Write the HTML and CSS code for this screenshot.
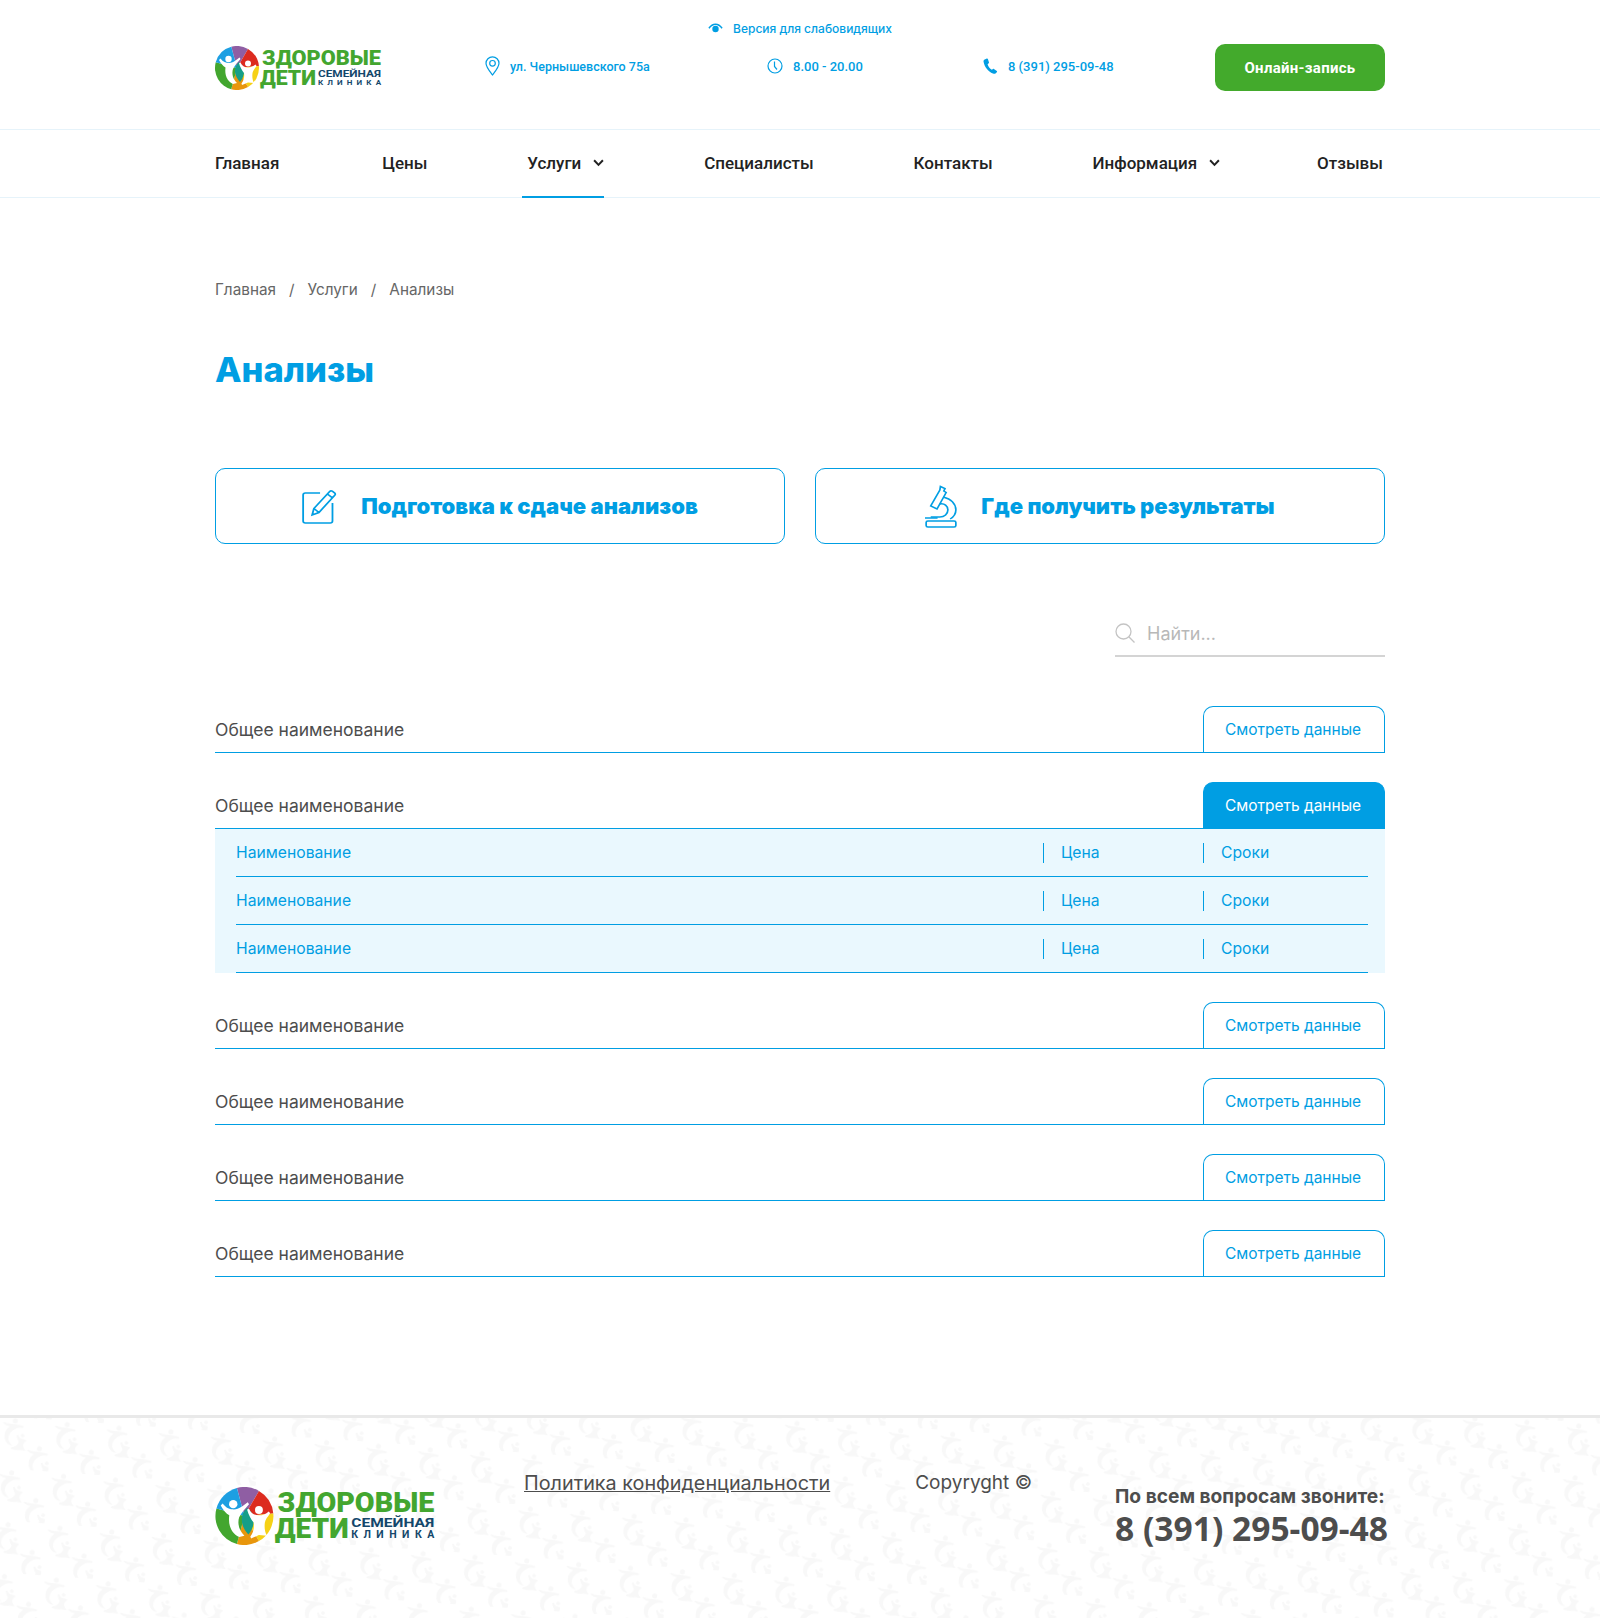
FILE: index.html
```html
<!DOCTYPE html>
<html lang="ru">
<head>
<meta charset="UTF-8" />
<title>Анализы - Здоровые дети</title>
<link rel="stylesheet" href="styles.css">
</head>
<body>

<header class="header">
    <div class="container">
        <a class="low-vision" href="#">
            <svg class="icon-eye" viewBox="0 0 16 11"><path d="M1 5.2C3 2.4 5.4 1 8 1s5 1.4 7 4.2" fill="none" stroke="#009ee3" stroke-width="1.6"/><circle cx="8" cy="6" r="3.4" fill="#009ee3"/></svg>
            Версия для слабовидящих
        </a>
        <div class="header-main">
            <a class="logo" href="#">
                <svg class="logo-img" viewBox="0 0 167 44">
                    <path d="M22 22L16.3.75A22 22 0 0 1 33 2.95Z" fill="#8f5ea3"/>
                    <path d="M22 22L33 2.95A22 22 0 0 1 43.9 20.1Z" fill="#dc2b1f"/>
                    <path d="M22 22L43.9 20.1A22 22 0 0 1 33 41.05Z" fill="#f6d116"/>
                    <path d="M22 22L33 41.05A22 22 0 0 1 16.3 43.25Z" fill="#e8960c"/>
                    <path d="M22 22L16.3 43.25A22 22 0 0 1 .75 16.3Z" fill="#43a62f"/>
                    <path d="M22 22L.75 16.3A22 22 0 0 1 16.3.75Z" fill="#1d9fe2"/>
                    <path d="M24 16C30 20 31 29 25 36C19 30 18 21 24 16Z" fill="#159e88"/>
                    <circle cx="13.5" cy="13" r="3.2" fill="#fff"/>
                    <path d="M4 14L5.500 12.500C8 16 11 17 14 17C18 17 21 14 24.500 11.500L25.500 13C22.500 16.500 20 19 18 23C16.500 28 18 33 22 37L18 38C12 35 9.500 29 10.500 21.500C8 20 6 17.500 4 14Z" fill="#fff"/>
                    <circle cx="33" cy="17.500" r="3" fill="#fff"/>
                    <path d="M24 17L25.500 16.500C27 20 29.500 21.500 33 21.500C36 21.500 38 20.500 40.500 18.500L41.500 20C39.500 23 38 24.500 37.500 27C37 31 37.500 34 39 37L33 36.500L27 39L26.500 37.500C29 34.500 29.500 31 29 27C27 24.500 25 21 24 17Z" fill="#fff"/>
                    <text class="logo-big" x="47" y="19" textLength="119" lengthAdjust="spacingAndGlyphs">ЗДОРОВЫЕ</text>
                    <text class="logo-big" x="45" y="38.500" textLength="56" lengthAdjust="spacingAndGlyphs">ДЕТИ</text>
                    <text class="logo-small" x="103" y="30.500" textLength="63" lengthAdjust="spacingAndGlyphs">СЕМЕЙНАЯ</text>
                    <text class="logo-small logo-small-wide" x="103" y="38.500" textLength="63" lengthAdjust="spacing">КЛИНИКА</text>
                </svg>
            </a>
            <a class="contact contact-address" href="#">
                <svg class="icon-pin" viewBox="0 0 15 20"><path d="M7.500 19C4 14.500 1 11 1 7.300A6.500 6.500 0 0 1 14 7.300C14 11 11 14.500 7.500 19Z" fill="none" stroke="#009ee3" stroke-width="1.2"/><circle cx="7.500" cy="7.300" r="2.800" fill="none" stroke="#009ee3" stroke-width="1.2"/></svg>
                ул. Чернышевского 75а
            </a>
            <span class="contact contact-time">
                <svg class="icon-clock" viewBox="0 0 16 16"><circle cx="8" cy="8" r="7" fill="none" stroke="#009ee3" stroke-width="1.2"/><path d="M7.500 3.500V8.500L10 11.500" fill="none" stroke="#009ee3" stroke-width="1.2"/></svg>
                8.00 - 20.00
            </span>
            <a class="contact contact-phone" href="#">
                <svg class="icon-phone" viewBox="0 0 15 16"><path d="M1.200 1.800L3.800 .6C4.300.4 4.700.6 4.900 1L6 4.400C6.100 4.800 6 5.100 5.700 5.300L4.600 6.200C5.300 8.500 6.800 10.500 8.800 11.800L10 10.900C10.300 10.700 10.600 10.700 10.900 10.900L13.800 13C14.100 13.300 14.200 13.700 14 14L12.500 15.400C11.900 15.800 11 15.900 10 15.500C5 13.500 1.500 9 .5 3.500C.4 2.800.7 2.100 1.200 1.800Z" fill="#009ee3"/></svg>
                8 (391) 295-09-48
            </a>
            <a class="btn-online" href="#">Онлайн-запись</a>
        </div>
    </div>
</header>

<nav class="nav">
    <div class="container">
        <div class="nav-list">
            <a href="#">Главная</a>
            <a href="#">Цены</a>
            <a class="active" href="#">Услуги <svg class="chevron" viewBox="0 0 10 7"><path d="M1 1L5 5.200L9 1" fill="none" stroke="#222" stroke-width="1.800"/></svg></a>
            <a href="#">Специалисты</a>
            <a href="#">Контакты</a>
            <a href="#">Информация <svg class="chevron" viewBox="0 0 10 7"><path d="M1 1L5 5.200L9 1" fill="none" stroke="#222" stroke-width="1.800"/></svg></a>
            <a href="#">Отзывы</a>
        </div>
    </div>
</nav>

<main class="container">
    <div class="breadcrumbs">
        <a href="#">Главная</a><span>/</span><a href="#">Услуги</a><span>/</span><a href="#">Анализы</a>
    </div>

    <h1>Анализы</h1>

    <div class="big-links">
        <a class="big-link" href="#">
            <svg class="icon-edit" viewBox="0 0 31 35" preserveAspectRatio="none">
                <path d="M16 4H3A2 2 0 0 0 1 6V32A2 2 0 0 0 3 34H25A2 2 0 0 0 27 32V14" fill="none" stroke="#009ee3" stroke-width="1.600"/>
                <path d="M9 26L10.500 19.500L24.500 2.500C25.200 1.700 26 1.600 26.800 2.200L28.800 3.900C29.600 4.600 29.700 5.400 29 6.200L15 23.500ZM10.500 19.500L15 23.500M22.500 5L27 8.800" fill="none" stroke="#009ee3" stroke-width="1.600"/>
            </svg>
            Подготовка к сдаче анализов
        </a>
        <a class="big-link" href="#">
            <svg class="icon-micro" viewBox="0 0 28 43" preserveAspectRatio="none">
                <path d="M13.500 1.500L17.500 3.500L16.500 6L18.500 7.500L10.500 24L5 21L13 5Z" fill="none" stroke="#009ee3" stroke-width="1.500"/>
                <path d="M16 12C23 14 27 19 27 25C27 29 25 32 22 34M13 19C17 18 20 21 20 25C20 29 17 32 13 32H5" fill="none" stroke="#009ee3" stroke-width="1.500"/>
                <path d="M0 33H11" fill="none" stroke="#009ee3" stroke-width="1.500"/>
                <rect x="1" y="36" width="26" height="6" rx="1.500" fill="none" stroke="#009ee3" stroke-width="1.500"/>
            </svg>
            Где получить результаты
        </a>
    </div>

    <div class="search">
        <svg class="icon-search" viewBox="0 0 20 20"><circle cx="8.500" cy="8.500" r="7.500" fill="none" stroke="#c4c4c4" stroke-width="1.300"/><path d="M13.800 13.800L19.500 19.500" stroke="#c4c4c4" stroke-width="1.300"/></svg>
        <input type="text" placeholder="Найти...">
    </div>

    <div class="price-list">
        <div class="group">
            <div class="group-head">
                <span class="group-name">Общее наименование</span>
                <a class="btn-data" href="#">Смотреть данные</a>
            </div>
        </div>
        <div class="group">
            <div class="group-head">
                <span class="group-name">Общее наименование</span>
                <a class="btn-data open" href="#">Смотреть данные</a>
            </div>
            <div class="group-body">
                <div class="item"><span class="item-name">Наименование</span><span class="item-price">Цена</span><span class="item-term">Сроки</span></div>
                <div class="item"><span class="item-name">Наименование</span><span class="item-price">Цена</span><span class="item-term">Сроки</span></div>
                <div class="item"><span class="item-name">Наименование</span><span class="item-price">Цена</span><span class="item-term">Сроки</span></div>
            </div>
        </div>
        <div class="group">
            <div class="group-head">
                <span class="group-name">Общее наименование</span>
                <a class="btn-data" href="#">Смотреть данные</a>
            </div>
        </div>
        <div class="group">
            <div class="group-head">
                <span class="group-name">Общее наименование</span>
                <a class="btn-data" href="#">Смотреть данные</a>
            </div>
        </div>
        <div class="group">
            <div class="group-head">
                <span class="group-name">Общее наименование</span>
                <a class="btn-data" href="#">Смотреть данные</a>
            </div>
        </div>
        <div class="group">
            <div class="group-head">
                <span class="group-name">Общее наименование</span>
                <a class="btn-data" href="#">Смотреть данные</a>
            </div>
        </div>
    </div>
</main>

<footer class="footer">
    <svg class="footer-bg" width="100%" height="100%">
        <defs>
            <g id="kid" fill="#f8f8f8">
                <circle cx="15" cy="4" r="3"/>
                <path d="M1 9L2.500 8C6 9 9 8.500 12 8C15 8 21 7 26 8L26 10C22 10.500 19 11 17 13C13 16 11 20 11 24C11 28 14 31 18 33L14 33C8 31 5 25 6 19C6.500 16 8 13.500 10 11.500C7 11.500 4 11 1 9Z"/>
                <circle cx="27" cy="19" r="2.200"/>
                <path d="M20 20L22 19.500C23 22 25 23 27 23L32 23L32 25C30 26 29.500 28 30 31C31 33 33 35 34 36L28 36C25 37 21 38 16 37L17 35C21 34 24 31 24 27C22 25 21 23 20 20Z"/>
            </g>
            <pattern id="kids" width="52" height="52" patternUnits="userSpaceOnUse" patternTransform="translate(0 -2) rotate(4)">
                <use href="#kid" transform="translate(1 1) scale(.85) rotate(8 20 20)"/>
                <use href="#kid" transform="translate(27 27) scale(.85) rotate(8 20 20)"/>
            </pattern>
        </defs>
        <rect width="100%" height="100%" fill="url(#kids)"/>
    </svg>
    <div class="container footer-inner">
        <a class="footer-logo" href="#">
            <svg class="logo-img" viewBox="0 0 167 44">
                <path d="M22 22L16.300.75A22 22 0 0 1 33 2.950Z" fill="#8f5ea3"/>
                <path d="M22 22L33 2.950A22 22 0 0 1 43.900 20.100Z" fill="#dc2b1f"/>
                <path d="M22 22L43.900 20.100A22 22 0 0 1 33 41.050Z" fill="#f6d116"/>
                <path d="M22 22L33 41.050A22 22 0 0 1 16.300 43.250Z" fill="#e8960c"/>
                <path d="M22 22L16.300 43.250A22 22 0 0 1 .75 16.300Z" fill="#43a62f"/>
                <path d="M22 22L.75 16.300A22 22 0 0 1 16.300.75Z" fill="#1d9fe2"/>
                <path d="M24 16C30 20 31 29 25 36C19 30 18 21 24 16Z" fill="#159e88"/>
                <circle cx="13.500" cy="13" r="3.200" fill="#fff"/>
                <path d="M4 14L5.500 12.500C8 16 11 17 14 17C18 17 21 14 24.500 11.500L25.500 13C22.500 16.500 20 19 18 23C16.500 28 18 33 22 37L18 38C12 35 9.500 29 10.500 21.500C8 20 6 17.500 4 14Z" fill="#fff"/>
                <circle cx="33" cy="17.500" r="3" fill="#fff"/>
                <path d="M24 17L25.500 16.500C27 20 29.500 21.500 33 21.500C36 21.500 38 20.500 40.500 18.500L41.500 20C39.500 23 38 24.500 37.500 27C37 31 37.500 34 39 37L33 36.500L27 39L26.500 37.500C29 34.500 29.500 31 29 27C27 24.500 25 21 24 17Z" fill="#fff"/>
                <text class="logo-big" x="47" y="19" textLength="119" lengthAdjust="spacingAndGlyphs">ЗДОРОВЫЕ</text>
                <text class="logo-big" x="45" y="38.500" textLength="56" lengthAdjust="spacingAndGlyphs">ДЕТИ</text>
                <text class="logo-small" x="103" y="30.500" textLength="63" lengthAdjust="spacingAndGlyphs">СЕМЕЙНАЯ</text>
                <text class="logo-small logo-small-wide" x="103" y="38.500" textLength="63" lengthAdjust="spacing">КЛИНИКА</text>
            </svg>
        </a>
        <a class="footer-policy" href="#">Политика конфиденциальности</a>
        <span class="footer-copy">Copyryght ©</span>
        <div class="footer-call">
            <div class="footer-call-title">По всем вопросам звоните:</div>
            <a class="footer-phone" href="#">8 (391) 295-09-48</a>
        </div>
    </div>
</footer>

</body>
</html>
```

FILE: styles.css
```css
* {
  box-sizing: border-box;
}
body {
  margin: 0;
  font-family: 'Inter', sans-serif;
  color: #4d4d4d;
  background-color: #fff;
}
a {
  text-decoration: none;
  color: inherit;
}
.container {
  width: 1170px;
  margin: 0 auto;
}

/* header */
.header {
  height: 130px;
  padding-top: 19px;
  border-bottom: 1px solid #e6f3fa;
}
.low-vision {
  display: flex;
  justify-content: center;
  align-items: center;
  gap: 10px;
  height: 18px;
  margin-bottom: 7px;
  font-size: 12px;
  font-weight: 500;
  color: #009ee3;
}
.icon-eye {
  width: 15px;
  height: 11px;
}
.header-main {
  display: grid;
  grid-template-columns: 270px 282px 216px 232px 170px;
  align-items: center;
  height: 47px;
}
.logo {
  display: block;
  height: 44px;
}
.logo-img {
  display: block;
  width: 100%;
  height: 100%;
}
.logo .logo-img {
  width: 167px;
}
.logo-big {
  font-family: 'Roboto', sans-serif;
  font-size: 21px;
  font-weight: 900;
  fill: #43a62f;
}
.logo-small {
  font-family: 'Roboto', sans-serif;
  font-size: 9px;
  font-weight: 700;
  fill: #14476b;
}
.logo-small-wide {
  font-size: 8px;
}
.contact {
  display: flex;
  align-items: center;
  gap: 10px;
  margin-top: -3px;
  font-family: 'Roboto', sans-serif;
  font-size: 13px;
  font-weight: 500;
  color: #009ee3;
}
.contact-address {
  font-size: 12.500px;
}
.icon-pin {
  width: 15px;
  height: 20px;
}
.icon-clock {
  width: 16px;
  height: 16px;
}
.icon-phone {
  width: 15px;
  height: 16px;
}
.btn-online {
  display: flex;
  align-items: center;
  justify-content: center;
  height: 47px;
  border-radius: 10px;
  background-color: #43aa2c;
  color: #fff;
  font-family: 'Roboto', sans-serif;
  font-size: 15px;
  font-weight: 700;
  letter-spacing: 0.3px;
}

/* nav */
.nav {
  height: 68px;
  border-bottom: 1px solid #e6f3fa;
}
.nav-list {
  display: flex;
  justify-content: space-between;
  height: 67px;
  margin: 0 -3px 0 -5px;
}
.nav-list a {
  display: flex;
  align-items: center;
  gap: 12px;
  height: 68px;
  padding: 0 5px 2px;
  font-family: 'Roboto', sans-serif;
  font-size: 17px;
  font-weight: 500;
  color: #222;
}
.nav-list a:first-child {
  padding-right: 8px;
}
.nav-list a:last-child {
  padding-left: 2px;
}
.nav-list a.active {
  border-bottom: 2px solid #009ee3;
  padding-right: 0;
  padding-bottom: 0;
  margin-right: 5px;
}
.chevron {
  width: 11px;
  height: 8px;
}

/* page */
.breadcrumbs {
  display: flex;
  gap: 13px;
  margin-top: 82px;
  font-size: 15.300px;
  line-height: 20px;
  color: #666;
}
h1 {
  margin: 48px 0 0;
  font-size: 34.500px;
  line-height: 44px;
  font-weight: 800;
  color: #009ee3;
}
.big-links {
  display: grid;
  grid-template-columns: 1fr 1fr;
  gap: 30px;
  margin-top: 76px;
}
.big-link {
  display: flex;
  align-items: center;
  justify-content: center;
  gap: 24px;
  height: 76px;
  border: 1px solid #009ee3;
  border-radius: 10px;
  font-size: 22px;
  font-weight: 900;
  color: #009ee3;
}
.icon-edit {
  width: 35px;
  height: 35px;
}
.icon-micro {
  width: 32px;
  height: 43px;
}
.search {
  display: flex;
  align-items: center;
  gap: 12px;
  width: 270px;
  height: 48px;
  padding-top: 2px;
  margin: 65px 0 0 auto;
  border-bottom: 2px solid #d4d4d4;
}
.icon-search {
  width: 20px;
  height: 20px;
}
.search input {
  flex: 1;
  min-width: 0;
  padding: 0;
  border: none;
  outline: none;
  background: none;
  font-family: 'Inter', sans-serif;
  font-size: 18px;
  color: #4d4d4d;
}
.search input::placeholder {
  color: #b8b8b8;
}
.price-list {
  display: flex;
  flex-direction: column;
  gap: 29px;
  margin-top: 49px;
}
.group-head {
  display: flex;
  justify-content: space-between;
  align-items: stretch;
  height: 47px;
  border-bottom: 1px solid #009ee3;
}
.group-name {
  align-self: center;
  font-size: 17.500px;
  color: #4d4d4d;
}
.btn-data {
  display: flex;
  align-items: center;
  justify-content: center;
  width: 182px;
  padding: 0 2px 0 0;
  border: 1px solid #009ee3;
  border-bottom: none;
  border-radius: 10px 10px 0 0;
  font-size: 15.500px;
  color: #009ee3;
}
.btn-data.open {
  background-color: #009ee3;
  color: #fff;
}
.group-body {
  padding: 0 17px 0 21px;
  background-color: #eaf8fe;
}
.item {
  display: flex;
  align-items: center;
  height: 48px;
  border-bottom: 1px solid #009ee3;
  font-size: 15.700px;
  color: #009ee3;
}
.item-name {
  width: 807px;
}
.item-price,
.item-term {
  display: flex;
  align-items: center;
  height: 20px;
  padding-left: 17px;
  border-left: 1px solid #009ee3;
}
.item-price {
  width: 160px;
}

/* footer */
.footer {
  position: relative;
  height: 203px;
  margin-top: 138px;
  border-top: 3px solid #e9e9e9;
  overflow: hidden;
}
.footer-bg {
  position: absolute;
  top: 0;
  left: 0;
}
.footer-inner {
  position: relative;
  display: flex;
  height: 100%;
}
.footer-logo {
  width: 221px;
  height: 58px;
  margin-top: 69px;
}
.footer-policy {
  margin: 52px 0 0 88px;
  font-size: 19.800px;
  line-height: 26px;
  height: 27px;
  color: #4d4d4d;
  text-decoration: underline;
}
.footer-copy {
  margin: 52px 0 0 85px;
  font-size: 19px;
  line-height: 26px;
  height: 26px;
}
.footer-call {
  margin: 66px -3px 0 auto;
  font-weight: 700;
}
.footer-call-title {
  font-size: 19.200px;
  line-height: 24px;
}
.footer-phone {
  display: block;
  margin-top: -1px;
  font-family: 'Open Sans', sans-serif;
  font-size: 33.600px;
  line-height: 42px;
}
```
